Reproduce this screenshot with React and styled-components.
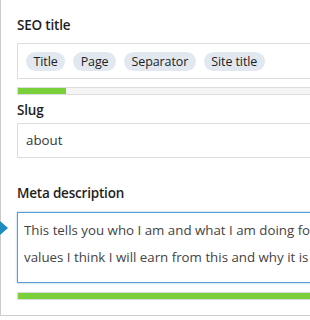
import React from 'react';
import styled, { createGlobalStyle } from 'styled-components';

const GlobalStyle = createGlobalStyle`
  html, body {
    margin: 0;
    padding: 0;
    background: #fff;
    overflow: hidden;
  }
  body {
    font-family: 'Open Sans', 'Noto Sans', sans-serif;
  }
`;

const Panel = styled.div`
  width: 420px;
  height: 316px;
  border-left: 1px solid #ccc;
  border-bottom: 1px solid #ccc;
  padding: 15px 0 0 16px;
  box-sizing: border-box;
  position: relative;
`;

const Section = styled.div`
  margin-bottom: ${(p) => p.$gap || 0}px;
`;

const Label = styled.div`
  font-size: 13.5px;
  font-weight: 600;
  letter-spacing: -0.2px;
  color: #1e1e1e;
  line-height: 20px;
  margin-bottom: ${(p) => p.$space}px;
`;

const Field = styled.div`
  width: 400px;
  height: 36px;
  border: 1px solid #ddd;
  box-sizing: border-box;
  display: flex;
  align-items: center;
  gap: 8px;
  padding: 0 8px;
`;

const Chip = styled.span`
  background: #e2e8f0;
  border-radius: 10px;
  height: 19px;
  line-height: 19px;
  padding: 0 7.5px;
  font-size: 12.5px;
  font-weight: 500;
  letter-spacing: -0.1px;
  color: #1e1e1e;
`;

const Input = styled.div`
  width: 400px;
  height: 35px;
  border: 1px solid #ddd;
  box-sizing: border-box;
  padding: 0 8px;
  font-size: 13.3px;
  line-height: 33px;
  color: #32373c;
`;

const TextArea = styled.div`
  width: 400px;
  height: 71px;
  border: 1px solid #5b9dd9;
  box-shadow: 0 0 2px rgba(30, 140, 190, 0.5);
  box-sizing: border-box;
  padding: 4px 6px;
  font-size: 13.3px;
  line-height: 27px;
  color: #444;
  white-space: nowrap;
`;

const Bar = styled.div`
  width: 400px;
  height: 8px;
  margin-top: ${(p) => p.$top}px;
  border: 1px solid #ddd;
  box-sizing: border-box;
  background: #f5f5f5;
  overflow: hidden;
`;

const Fill = styled.div`
  height: 100%;
  background: #7ad03a;
`;

const Pointer = styled.div`
  position: absolute;
  left: -1px;
  top: 221px;
  width: 0;
  height: 0;
  border-top: 7px solid transparent;
  border-bottom: 7px solid transparent;
  border-left: 8px solid #1e8cbe;
`;

export default function App() {
  return (
    <>
      <GlobalStyle />
      <Panel>
        <Section $gap={5}>
          <Label $space={8}>SEO title</Label>
          <Field>
            <Chip>Title</Chip>
            <Chip>Page</Chip>
            <Chip>Separator</Chip>
            <Chip>Site title</Chip>
          </Field>
          <Bar $top={8}>
            <Fill style={{ width: '12%' }} />
          </Bar>
        </Section>
        <Section $gap={25}>
          <Label $space={3}>Slug</Label>
          <Input>about</Input>
        </Section>
        <Section>
          <Label $space={9}>Meta description</Label>
          <TextArea>
            This tells you who I am and what I am doing for my company
            <br />
            values I think I will earn from this and why it is important
          </TextArea>
          <Bar $top={9}>
            <Fill style={{ width: '100%' }} />
          </Bar>
        </Section>
        <Pointer />
      </Panel>
    </>
  );
}
